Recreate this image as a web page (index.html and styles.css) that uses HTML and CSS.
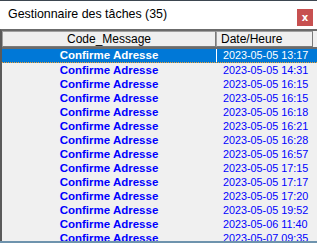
FILE: index.html
```html
<!DOCTYPE html>
<html lang="fr">
<head>
<meta charset="utf-8">
<link rel="stylesheet" href="styles.css">
</head>
<body>
<div class="window">
  <div class="titlebar">
    <span class="title">Gestionnaire des tâches (35)</span>
    <span class="close">x</span>
  </div>
  <div class="grid">
    <div class="head">
      <div class="hcell c1">Code_Message</div>
      <div class="hcell c2">Date/Heure</div>
    </div>
    <div class="rows">
      <div class="row sel"><div class="cell c1">Confirme Adresse</div><div class="cell c2">2023-05-05 13:17</div></div>
      <div class="row"><div class="cell c1">Confirme Adresse</div><div class="cell c2">2023-05-05 14:31</div></div>
      <div class="row"><div class="cell c1">Confirme Adresse</div><div class="cell c2">2023-05-05 16:15</div></div>
      <div class="row"><div class="cell c1">Confirme Adresse</div><div class="cell c2">2023-05-05 16:15</div></div>
      <div class="row"><div class="cell c1">Confirme Adresse</div><div class="cell c2">2023-05-05 16:18</div></div>
      <div class="row"><div class="cell c1">Confirme Adresse</div><div class="cell c2">2023-05-05 16:21</div></div>
      <div class="row"><div class="cell c1">Confirme Adresse</div><div class="cell c2">2023-05-05 16:28</div></div>
      <div class="row"><div class="cell c1">Confirme Adresse</div><div class="cell c2">2023-05-05 16:57</div></div>
      <div class="row"><div class="cell c1">Confirme Adresse</div><div class="cell c2">2023-05-05 17:15</div></div>
      <div class="row"><div class="cell c1">Confirme Adresse</div><div class="cell c2">2023-05-05 17:17</div></div>
      <div class="row"><div class="cell c1">Confirme Adresse</div><div class="cell c2">2023-05-05 17:20</div></div>
      <div class="row"><div class="cell c1">Confirme Adresse</div><div class="cell c2">2023-05-05 19:52</div></div>
      <div class="row"><div class="cell c1">Confirme Adresse</div><div class="cell c2">2023-05-06 11:40</div></div>
      <div class="row"><div class="cell c1">Confirme Adresse</div><div class="cell c2">2023-05-07 09:35</div></div>
    </div>
  </div>
  <div class="bottom"></div>
</div>
</body>
</html>
```
FILE: styles.css
```css
html, body {
  margin: 0;
  padding: 0;
  background: #ffffff;
  overflow: hidden;
}
.window {
  width: 317px;
  height: 243px;
  display: flex;
  flex-direction: column;
  border-top: 1px solid #3d4650;
  box-sizing: border-box;
  overflow: hidden;
}
.titlebar {
  height: 28px;
  flex: none;
  display: flex;
  align-items: center;
  justify-content: space-between;
  padding: 0 4px 0 8px;
  background: #ffffff;
}
.title {
  font-family: "Liberation Sans", Arial, sans-serif;
  font-size: 12.4px;
  color: #000000;
  margin-top: -2px;
}
.close {
  width: 16px;
  height: 17px;
  background: #c75050;
  color: #ffffff;
  font-family: "DejaVu Sans", sans-serif;
  font-weight: bold;
  font-size: 10px;
  display: flex;
  align-items: center;
  justify-content: center;
  margin-top: 5px;
}
.grid {
  flex: 1;
  display: flex;
  flex-direction: column;
  border-top: 2px solid #6b6b6b;
  border-left: 2px solid #5a5a5a;
  background: #f0f0f0;
  min-height: 0;
  overflow: hidden;
}
.head {
  display: flex;
  height: 16px;
  flex: none;
  border-bottom: 2px solid #6b6b6b;
}
.hcell {
  box-sizing: border-box;
  background: #efefef;
  border: 1px solid #a0a0a0;
  border-right-color: #7a7a7a;
  border-bottom-color: #7a7a7a;
  font-family: "Liberation Sans", Arial, sans-serif;
  font-size: 12px;
  line-height: 14px;
  color: #000000;
}
.c1 { width: 214px; flex: none; text-align: center; }
.c2 { width: 97px; flex: none; text-align: left; padding-left: 4px; }
.rows {
  display: flex;
  flex-direction: column;
}
.row {
  display: flex;
  height: 14px;
  flex: none;
  box-sizing: border-box;
}
.cell {
  box-sizing: border-box;
  font-family: "Liberation Sans", Arial, sans-serif;
  line-height: 14px;
  color: #0000ff;
  white-space: nowrap;
}
.cell.c1 {
  font-weight: bold;
  font-size: 11.5px;
}
.cell.c2 {
  font-size: 10.8px;
  padding-left: 7px;
}
.row.sel {
  background: #0078d7;
  border-bottom: 1px dotted #f0a030;
}
.row.sel .cell {
  color: #ffffff;
  line-height: 13px;
}
.row.sel .c2 {
  border-left: 1px solid #ffffff;
  padding-left: 6px;
}
.bottom {
  height: 2px;
  flex: none;
  background: #6e93ad;
}
```
